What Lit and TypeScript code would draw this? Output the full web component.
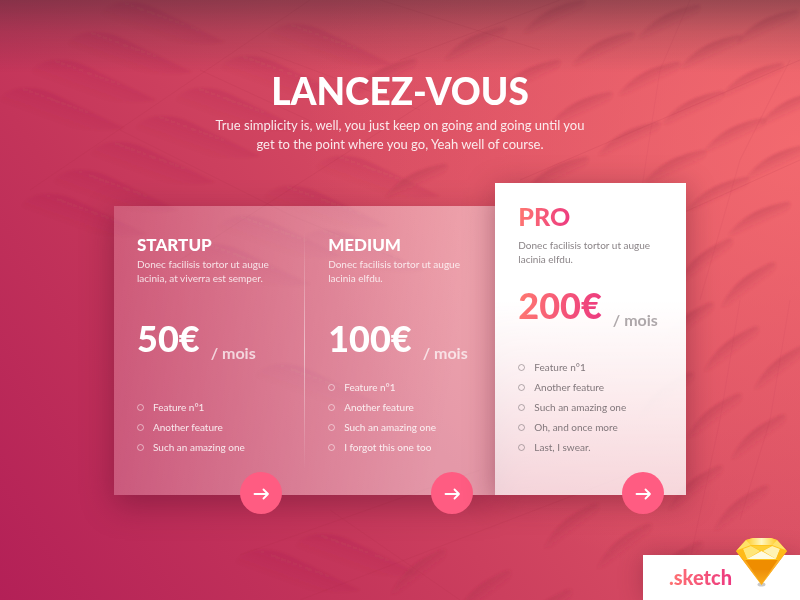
import { LitElement, html, svg, css } from "lit";
import { customElement, property } from "lit/decorators.js";

interface Plan {
  name: string;
  description: string;
  price: string;
  features: string[];
  featured?: boolean;
}

const plans: Plan[] = [
  {
    name: "STARTUP",
    description: "Donec facilisis tortor ut augue lacinia, at viverra est semper.",
    price: "50€",
    features: ["Feature n°1", "Another feature", "Such an amazing one"],
  },
  {
    name: "MEDIUM",
    description: "Donec facilisis tortor ut augue lacinia elfdu.",
    price: "100€",
    features: ["Feature n°1", "Another feature", "Such an amazing one", "I forgot this one too"],
  },
  {
    name: "PRO",
    description: "Donec facilisis tortor ut augue lacinia elfdu.",
    price: "200€",
    features: ["Feature n°1", "Another feature", "Such an amazing one", "Oh, and once more", "Last, I swear."],
    featured: true,
  },
];

// Tips of the scales that open to the right.
const rightScales = [
  [585, 1], [506, 28], [634, 33], [560, 61], [700, 6], [742, 36], [798, 11], [680, 63], [783, 64],
  [612, 93], [724, 92], [660, 123], [766, 119], [822, 92], [588, 158], [706, 151], [749, 178], [808, 146],
  [790, 203], [732, 239], [775, 263], [713, 303], [758, 327], [808, 345], [693, 373], [741, 394], [785, 415],
  [722, 466], [768, 486], [598, 504], [651, 524], [702, 542], [445, 550], [510, 571], [571, 590], [447, 165],
  [416, 60],
];

// Crests of the scales on the left side of the facade.
const leftScales = [
  [272, 30], [225, 62], [180, 94], [140, 122], [95, 148], [58, 176], [105, 8], [72, 38], [36, 66], [4, 94],
  [320, 162], [268, 192], [222, 222], [26, 200], [190, 250], [304, 236], [300, 540], [240, 556], [260, 370],
];

@customElement("facade-backdrop")
export class FacadeBackdrop extends LitElement {
  static styles = css`
    :host { display: block; }
    .art { display: block; width: 100%; height: 100%; }
  `;

  render() {
    return html`
      <svg class="art" viewBox="0 0 800 600" preserveAspectRatio="xMidYMid slice" aria-hidden="true">
        <defs>
          <linearGradient id="scaleRight" gradientUnits="userSpaceOnUse" x1="-27" y1="5" x2="-21" y2="18">
            <stop offset="0" stop-color="#a8304a" stop-opacity=".34" />
            <stop offset=".5" stop-color="#a8304a" stop-opacity=".16" />
            <stop offset="1" stop-color="#a8304a" stop-opacity="0" />
          </linearGradient>
          <linearGradient id="scaleLeft" gradientUnits="userSpaceOnUse" x1="30" y1="-4" x2="22" y2="18">
            <stop offset="0" stop-color="#9a2448" stop-opacity=".12" />
            <stop offset="1" stop-color="#9a2448" stop-opacity="0" />
          </linearGradient>
          <filter id="soft" x="-10%" y="-10%" width="120%" height="120%">
            <feGaussianBlur stdDeviation=".8" />
          </filter>
        </defs>
        <g fill="none" stroke="#a82c48" stroke-opacity=".13">
          <path d="M310 0 30 190M460 80 180 260M640 470 300 600M480 470 240 555M800 60 520 180M800 160 600 250M560 0 400 60" />
          <path d="M380 0 540 50M260 50 420 110M200 70 330 130M120 130 290 215M290 215 400 260M330 510 460 600" />
          <path d="M690 0 660 70 640 200M790 60 740 160 700 300M740 300 720 420 690 560M790 300 770 420 740 520" stroke-opacity=".08" />
        </g>
        <g filter="url(#soft)">
          ${rightScales.map(
            ([x, y]) => svg`<path transform="translate(${x} ${y}) rotate(${y > 220 ? -12 : 0})" fill="url(#scaleRight)"
              d="M-62 32C-46 11-27 4-4-1C2-2 2 3-3 9C-16 26-40 36-62 32Z" />`
          )}
          ${leftScales.map(
            ([x, y]) => svg`<path transform="translate(${x} ${y})" fill="url(#scaleLeft)"
              d="M-5 6C8-9 28-9 50 0L120 34C90 40 20 32-5 6Z" />`
          )}
        </g>
      </svg>
    `;
  }
}

@customElement("plan-card")
export class PlanCard extends LitElement {
  @property({ attribute: false }) plan!: Plan;
  @property({ type: Boolean, reflect: true }) featured = false;

  static styles = css`
    :host {
      position: relative;
      display: flex;
      flex-direction: column;
      box-sizing: border-box;
      padding: 28px 23px 38px;
      color: #fff;
    }
    .name { margin: 0; font-size: 17px; line-height: 22px; font-weight: 900; align-self: flex-start; }
    .description { margin: 1px 0 0; font-size: 10px; line-height: 14px; opacity: 0.8; }
    .cost { display: flex; gap: 11px; height: 47px; margin: 31px 0 0; white-space: nowrap; }
    .amount { align-self: flex-start; font-size: 36px; line-height: 44px; font-weight: 900; }
    .period { align-self: flex-end; font-size: 16px; line-height: 20px; font-weight: 700; opacity: 0.7; }
    .features { list-style: none; margin: auto 0 0; padding: 0; font-size: 10px; line-height: 20px; }
    .feature { display: flex; align-items: center; gap: 9px; white-space: nowrap; }
    .feature::before {
      content: "";
      box-sizing: border-box;
      width: 7px;
      height: 7px;
      border: 1px solid currentColor;
      border-radius: 50%;
      opacity: 0.5;
    }
    .label { opacity: 0.85; }
    .choose {
      position: absolute;
      right: 22px;
      bottom: -19px;
      width: 42px;
      height: 42px;
      padding: 0;
      border: 0;
      border-radius: 50%;
      background: #ff5c82;
      display: grid;
      place-items: center;
      cursor: pointer;
    }
    .arrow { display: block; width: 18px; height: 14px; }

    :host([featured]) {
      padding-top: 18px;
      color: #6c6468;
      background: linear-gradient(#fff 38%, rgba(255, 255, 255, 0.77));
      box-shadow: 0 6px 28px rgba(80, 15, 35, 0.42);
    }
    :host([featured]) .name { font-size: 25px; line-height: 30px; }
    :host([featured]) .name,
    :host([featured]) .amount {
      color: transparent;
      background: linear-gradient(100deg, #ff7a70, #ec3880);
      background-clip: text;
      -webkit-background-clip: text;
    }
    :host([featured]) .description { margin-top: 7px; }
    :host([featured]) .cost { margin-top: 17px; }
    :host([featured]) .period { opacity: 0.55; }
    :host([featured]) .features { margin-top: 27px; }
  `;

  render() {
    const { name, description, price, features } = this.plan;
    return html`
      <h2 class="name">${name}</h2>
      <p class="description">${description}</p>
      <p class="cost"><span class="amount">${price}</span><span class="period">/ mois</span></p>
      <ul class="features">
        ${features.map((f) => html`<li class="feature"><span class="label">${f}</span></li>`)}
      </ul>
      <button class="choose" type="button" aria-label=${name}>
        <svg class="arrow" viewBox="0 0 18 14" fill="none" stroke="#fff" stroke-width="1.8" stroke-linecap="round" stroke-linejoin="round">
          <path d="M2.500 8h13.500M11.500 3.500l4.500 4.500-4.500 4.500" />
        </svg>
      </button>
    `;
  }
}

@customElement("app-root")
export class AppRoot extends LitElement {
  static styles = css`
    :host {
      position: relative;
      display: flex;
      flex-direction: column;
      min-height: 100vh;
      overflow: hidden;
      color: #fff;
      font-family: Lato, "Liberation Sans", sans-serif;
      background:
        radial-gradient(ellipse 62% 75% at 100% 24%, rgba(250, 112, 114, 0.75), rgba(240, 100, 108, 0) 100%),
        linear-gradient(56deg, #b32057 0%, #c3345a 28%, #d54a62 56%, #de5867 100%);
    }
    .backdrop { position: absolute; inset: 0; }
    .shade {
      position: absolute;
      inset: 0 0 auto;
      height: 72px;
      background: linear-gradient(rgba(60, 42, 50, 0.46), rgba(60, 42, 50, 0.2) 45%, rgba(60, 42, 50, 0));
    }
    .main { position: relative; padding: 69px 24px 0; }
    .title { margin: 0; font-size: 37px; line-height: 44px; font-weight: 900; text-align: center; }
    .lead {
      max-width: 384px;
      margin: 3px auto 0;
      font-size: 13px;
      line-height: 19px;
      text-align: center;
      opacity: 0.88;
    }
    .plans {
      display: grid;
      grid-template-columns: repeat(3, 1fr);
      max-width: 572px;
      margin: 29px auto 0;
    }
    .glass {
      grid-column: 1 / 3;
      display: grid;
      grid-template-columns: 1fr 1px 1fr;
      margin-top: 23px;
      background: linear-gradient(100deg, rgba(255, 255, 255, 0.18), rgba(255, 255, 255, 0.46) 85%);
      box-shadow: 0 10px 30px rgba(80, 15, 40, 0.42);
    }
    .divider {
      margin: 24px 0;
      background: linear-gradient(rgba(255, 255, 255, 0), rgba(255, 255, 255, 0.5) 50%, rgba(255, 255, 255, 0));
    }
    .footer { position: relative; display: flex; justify-content: flex-end; margin-top: auto; }
    .badge {
      display: flex;
      align-items: flex-start;
      height: 45px;
      padding: 0 13px 0 26px;
      box-sizing: border-box;
      background: #fff;
      box-shadow: 0 0 24px rgba(80, 15, 35, 0.3);
      text-decoration: none;
    }
    .format {
      font-size: 20px;
      line-height: 44px;
      font-weight: 900;
      color: transparent;
      background: linear-gradient(90deg, #ff7472, #ec3880);
      background-clip: text;
      -webkit-background-clip: text;
    }
    .gem { display: block; width: 51px; height: 50px; margin: -17px 0 0 4px; }
  `;

  render() {
    return html`
      <facade-backdrop class="backdrop"></facade-backdrop>
      <div class="shade"></div>
      <main class="main">
        <h1 class="title">LANCEZ-VOUS</h1>
        <p class="lead">
          True simplicity is, well, you just keep on going and going until you get to the point where you go, Yeah
          well of course.
        </p>
        <section class="plans">
          <div class="glass">
            <plan-card .plan=${plans[0]}></plan-card>
            <div class="divider"></div>
            <plan-card .plan=${plans[1]}></plan-card>
          </div>
          <plan-card featured .plan=${plans[2]}></plan-card>
        </section>
      </main>
      <footer class="footer">
        <a class="badge" href="#sketch">
          <span class="format">.sketch</span>
          <svg class="gem" viewBox="0 0 51 50" aria-hidden="true">
            <defs>
              <linearGradient id="pavilion" x1="0" y1="0" x2="0" y2="1">
                <stop offset="0" stop-color="#f08f00" />
                <stop offset=".6" stop-color="#fbab18" />
                <stop offset="1" stop-color="#ffd23a" />
              </linearGradient>
              <linearGradient id="centre" x1="0" y1="0" x2="0" y2="1">
                <stop offset="0" stop-color="#e37c00" />
                <stop offset="1" stop-color="#fcae1c" />
              </linearGradient>
              <linearGradient id="crown" x1="0" y1="0" x2="1" y2="0">
                <stop offset="0" stop-color="#ffcb25" />
                <stop offset=".5" stop-color="#fff7c0" />
                <stop offset="1" stop-color="#ffcb25" />
              </linearGradient>
            </defs>
            <ellipse cx="25.500" cy="46.500" rx="4" ry="2" fill="#777" opacity=".4" />
            <path d="M0 13 7 21H44L51 13 25.500 47Z" fill="url(#pavilion)" />
            <path d="M0 13 25.500 47 9 22Z" fill="#fba91f" />
            <path d="M51 13 25.500 47 42 22Z" fill="#fcb02a" />
            <path d="M10 22 25.500 47 41 22Z" fill="url(#centre)" />
            <path d="M10 22 17 32H34L41 22Z" fill="#ef8d00" />
            <path d="M0 13 10 2 17 0H35L41 2 51 13 43 22H8Z" fill="#ffc41c" />
            <path d="M10 2 17 0H35L41 2 36 7H15Z" fill="url(#crown)" />
            <path d="M10 2 15 7 7 10 1 12Z" fill="#ffe169" />
            <path d="M41 2 36 7 44 10 50 12Z" fill="#ffe169" />
            <path d="M15 8 7 11 11 21 24 13Z" fill="#ffe679" />
            <path d="M36 8 44 11 40 21 27 13Z" fill="#fff3b4" />
            <path d="M15 8H36L25.500 13Z" fill="#ffcf35" />
            <path d="M25.500 13 11 21H40Z" fill="#fffbe0" />
            <path d="M0 13 7 11 11 21 8 22Z" fill="#ffba18" />
            <path d="M51 13 44 11 40 21 43 22Z" fill="#ffba18" />
          </svg>
        </a>
      </footer>
      `;
  }
}
